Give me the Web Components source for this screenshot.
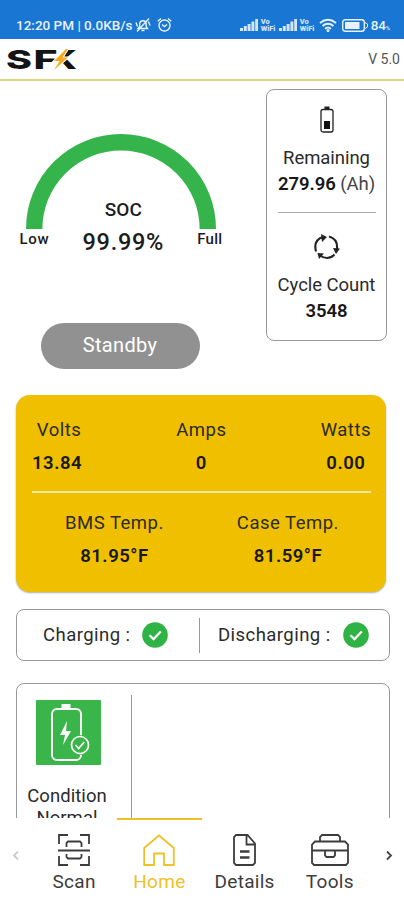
<!DOCTYPE html>
<html lang="en">
<head>
<meta charset="utf-8">
<meta name="viewport" content="width=device-width, initial-scale=1">
<title>SFK Battery</title>
<style>
body{
    margin:0;
    background:#fff;
    color:#2b2b2b;
    font-family:Roboto, "Liberation Sans", sans-serif;
}
</style>
</head>
<body>
<battery-app></battery-app>
<script>
const define = (name, html) => {
    customElements.define(name, class extends HTMLElement {
        constructor() {
            super()
            this._shadowRoot = this.attachShadow({ mode: 'open' })
        }
        connectedCallback(){
            this._shadowRoot.innerHTML = html
        }
    })
}

// android status bar
define('status-bar', `
<style>
:host{
    display:flex;
    align-items:center;
    height:39px;
    box-sizing:border-box;
    padding:11px 14px 0 16px;
    background:#1976d2;
    color:#e8f2fc;
    font-size:13.5px;
    font-weight:500;
    white-space:nowrap;
}
svg{ display:block; flex:none; }
.icons{ margin-left:3px; display:flex; gap:6px; }
.right{ margin-left:auto; display:flex; align-items:center; }
.vo{ width:16px; margin:0 2px 0 3px; font-size:7.5px; line-height:7px; font-weight:900; letter-spacing:-.1px; color:#cfe2f6; }
.level{ margin-left:3px; font-size:13.5px; letter-spacing:-.2px; }
.level small{ font-size:6px; }
</style>
<span>12:20 PM | 0.0KB/s</span>
<div class="icons">
    <svg width="16" height="16" viewBox="0 0 16 16" fill="none" stroke="#e8f2fc" stroke-width="1.4">
        <path d="M3 11.5h9.5l-1.3-2V6.5a3.3 3.3 0 0 0-6.5 0v3zM6.500 13.500h3M2 14.500l12-13M1 5.500l1.500 4M13.500 4.500l1.500 4"/>
    </svg>
    <svg width="15" height="16" viewBox="0 0 15 16" fill="none" stroke="#e8f2fc" stroke-width="1.400">
        <circle cx="7.500" cy="8.500" r="5.500"/><path d="M.7 4.200 4 1.500M14.300 4.200 11 1.500M5 7.500l2.300 2 2.800-2"/>
    </svg>
</div>
<div class="right">
    <svg width="18" height="12" viewBox="0 0 18 12" fill="#d3e5f7"><path d="M0 9h3v3H0zM3.800 7h3v5h-3zM7.600 5h3v7h-3zM11.400 2.500h3V12h-3zM15.200 0H18v12h-2.800z"/></svg>
    <div class="vo">Vo<br>WiFi</div>
    <svg width="18" height="12" viewBox="0 0 18 12" fill="#d3e5f7"><path d="M0 9h3v3H0zM3.800 7h3v5h-3zM7.600 5h3v7h-3zM11.400 2.500h3V12h-3zM15.200 0H18v12h-2.800z"/></svg>
    <div class="vo">Vo<br>WiFi</div>
    <svg style="margin-left:1px" width="18" height="14" viewBox="0 0 18 14" fill="none" stroke="#e8f2fc" stroke-width="1.900">
        <path d="M1 5q8-6.500 16 0M3.500 8q5.500-4.500 11 0M6 10.800q3-2.500 6 0"/><circle cx="9" cy="12.500" r=".6"/>
    </svg>
    <svg style="margin-left:5px" width="26" height="13" viewBox="0 0 26 13">
        <rect x=".7" y=".7" width="21.600" height="11.600" rx="2.500" fill="none" stroke="#e8f2fc" stroke-width="1.400"/>
        <path d="M3 3h14.500v7H3z" fill="#e8f2fc"/><path d="M23 3.500 25.500 5v3L23 9.500" fill="none" stroke="#e8f2fc"/>
    </svg>
    <span class="level">84<small>%</small></span>
</div>
`)

define('app-header', `
<style>
:host{
    display:flex;
    align-items:center;
    justify-content:space-between;
    height:42px;
    box-sizing:border-box;
    padding:0 4px 0 2px;
    border-bottom:2px solid #e5d281;
    background:#fff;
}
svg{ display:block; overflow:visible; }
.version{ font-size:14px; color:#555; }
</style>
<svg width="80" height="40" viewBox="-4 -8 80 40" role="img" aria-label="SFK">
    <g font-family="Inter, sans-serif" font-weight="800" font-size="26" fill="#141414">
        <text x="43" y="21.500" textLength="28" lengthAdjust="spacingAndGlyphs">K</text>
        <path d="M43 0h10.500v24H43z" fill="#fff"/>
        <text x="0" y="21.500" textLength="26" lengthAdjust="spacingAndGlyphs">S</text>
        <text x="27.500" y="21.500" textLength="24" lengthAdjust="spacingAndGlyphs">F</text>
    </g>
    <path d="M60 2 48 14h5.500l-5.500 9 14-12.500h-5.500l5.500-8.500z" fill="#f9a91b" stroke="#fff" stroke-width="2" paint-order="stroke"/>
</svg>
<span class="version">V 5.0</span>
`)

define('soc-gauge', `
<style>
:host{ display:flex; flex-direction:column; align-items:center; }
svg{ display:block; }
.ends{
    width:203px;
    display:flex;
    justify-content:space-between;
    align-items:flex-start;
    margin-top:-30px;
    font-weight:500;
    color:#1c1c1c;
}
.end{ font-size:15px; line-height:20px; margin-top:30px; letter-spacing:.3px; }
.low{ letter-spacing:.7px; }
.mid{ text-align:center; }
.name{ font-size:19px; line-height:22px; }
.value{ font-size:23.500px; line-height:26px; margin-top:8px; letter-spacing:.7px; }
</style>
<svg width="190" height="95" viewBox="0 0 190 95">
    <path d="M8.200 95a86.800 86.800 0 0 1 173.600 0" fill="none" stroke="#34b44a" stroke-width="16.400"/>
</svg>
<div class="ends">
    <span class="end low"><slot name="low"></slot></span>
    <div class="mid">
        <div class="name"><slot name="name"></slot></div>
        <div class="value"><slot></slot></div>
    </div>
    <span class="end"><slot name="full"></slot></span>
</div>
`)

// label over value
define('stat-item', `
<style>
:host{ display:flex; flex-direction:column; align-items:center; white-space:nowrap; }
.label{ font-size:18.500px; line-height:24px; letter-spacing:var(--label-spacing, .5px); }
.value{ font-size:18.500px; line-height:24px; margin-top:var(--gap, 2px); font-weight:600; color:#181818; letter-spacing:var(--value-spacing, .5px); }
</style>
<div class="label"><slot name="label"></slot></div>
<div class="value"><slot></slot></div>
`)

define('check-mark', `
<style>
:host{ display:block; width:26px; height:26px; }
svg{ display:block; }
</style>
<svg width="26" height="26" viewBox="0 0 26 26">
    <circle cx="13" cy="13" r="12.800" fill="#2fb344"/>
    <path d="m7.500 13.300 4 3.800 7.300-7.500" fill="none" stroke="#fff" stroke-width="2.200"/>
</svg>
`)

define('nav-item', `
<style>
:host{
    display:flex;
    flex-direction:column;
    align-items:center;
    width:85.300px;
    height:82px;
    box-sizing:border-box;
    padding-top:14px;
    border-top:2px solid transparent;
    color:#3c3c3c;
}
:host([active]){ color:#edc127; border-top-color:#edc127; }
.label{ font-size:19px; line-height:24px; margin-top:4px; letter-spacing:.3px; }
</style>
<slot name="icon"></slot>
<div class="label"><slot></slot></div>
`)

define('bottom-nav', `
<style>
:host{ display:flex; background:#fff; height:82px; }
.arrow{ width:31.500px; padding-top:32px; box-sizing:border-box; display:flex; justify-content:center; }
svg{ display:block; fill:none; stroke:currentColor; stroke-width:1.800; }
</style>
<div class="arrow"><svg width="8" height="11" viewBox="0 0 8 11" style="color:#ccc"><path d="M6 1.500 2 5.500l4 4"/></svg></div>
<nav-item>
    <svg slot="icon" width="32" height="32" viewBox="0 0 32 32">
        <path d="M1 10V1h9M22 1h9v9M31 22v9h-9M10 31H1v-9M0 16.500h32M8.500 13V9l1.500-1.500h12L23.500 9v4M8.500 20v3l1.500 1.500h12l1.500-1.500v-3"/>
    </svg>Scan
</nav-item>
<nav-item active>
    <svg slot="icon" width="32" height="32" viewBox="0 0 32 32">
        <path d="M1.200 14 16 1.500 30.800 14v17H21V19.500H11V31H1.200z"/>
    </svg>Home
</nav-item>
<nav-item>
    <svg slot="icon" width="32" height="32" viewBox="0 0 32 32">
        <path d="M7 1h11.500L26 9.500V29l-2 2H7l-2-2V3zM17.500 1v9.500H26"/><path d="M11 17.500h9.500M11 23.500h9.500" stroke-width="2.400"/>
    </svg>Details
</nav-item>
<nav-item>
    <svg slot="icon" width="38" height="32" viewBox="0 0 38 32">
        <path d="M4 7.500h30l3 3V29l-2 2H3l-2-2V10.500zM9 7.500V3l2-2h16l2 2v4.500M1 16.500h36M14 16.500v5l1.500 1.500h7l1.500-1.500v-5"/>
    </svg>Tools
</nav-item>
<div class="arrow"><svg style="color:#444;margin-left:2px" width="8" height="11" viewBox="0 0 8 11"><path d="m2 1.500 4 4-4 4"/></svg></div>
`)

define('battery-app', `
<style>
:host{ display:flex; flex-direction:column; height:900px; width:404px; overflow:hidden; }
main{ flex:1; min-height:0; overflow:hidden; padding:8px 0 0 16px; }
svg{ display:block; }
.top{ display:flex; height:306px; }
.soc{ width:210px; display:flex; flex-direction:column; align-items:center; padding-top:45px; box-sizing:border-box; }
.pill{
    width:159px;
    height:46px;
    margin:68px 2px 0 0;
    border-radius:23px;
    background:#919191;
    color:#fff;
    font-size:20px;
    line-height:45px;
    text-align:center;
    letter-spacing:.3px;
}
.side{
    width:121px;
    height:252px;
    margin-left:40px;
    box-sizing:border-box;
    border:1px solid #999;
    border-radius:8px;
    display:flex;
    flex-direction:column;
    align-items:center;
    padding-top:16px;
}
.side stat-item{ --label-spacing:-.05px; --value-spacing:-.05px; margin-top:13px; }
.side b{ font-weight:400; color:#444; }
hr{ border:0; margin:0; height:1px; background:#aaa; }
.yellow{
    width:370px;
    height:197px;
    box-sizing:border-box;
    border-radius:14px;
    background:#f0bf00;
    box-shadow:0 1px 2px #0005;
    padding:23px 15px 0 16px;
    --gap:9px;
}
.three{ display:flex; justify-content:space-between; }
.volts{ padding-left:4px; }
.two{ display:flex; justify-content:space-between; padding:18px 32px 0 33px; }
.yellow hr{ margin-top:16px; height:2px; background:#ffec9c; }
.box{ width:374px; box-sizing:border-box; border:1px solid #999; border-radius:8px; display:flex; }
.states{ height:52px; margin-top:17px; align-items:center; font-size:18.500px; letter-spacing:.45px; }
.state{ display:flex; align-items:center; gap:12px; }
.rule{ width:1px; background:#999; }
.condition{ height:300px; margin-top:22px; }
.cond{ width:114px; padding:16px 0 0 0; box-sizing:border-box; display:flex; flex-direction:column; align-items:center; font-size:18.500px; line-height:22px; text-align:center; letter-spacing:.05px; }
.cond svg{ margin:0 11px 20px 0; }
.cond span{ margin-right:14px; }
</style>
<status-bar></status-bar>
<app-header></app-header>
<main>
    <div class="top">
        <div class="soc">
            <soc-gauge><span slot="low">Low</span><span slot="name">SOC</span>99.99%<span slot="full">Full</span></soc-gauge>
            <div class="pill">Standby</div>
        </div>
        <div class="side">
            <svg width="14" height="27" viewBox="0 0 14 27"><path d="M4.500 3V.5h5V3" fill="#222"/><rect x="1" y="3.500" width="12" height="22.500" rx="2" fill="none" stroke="#222" stroke-width="1.300"/><path d="M4 15h6v8H4z" fill="#111"/></svg>
            <stat-item><span slot="label">Remaining</span>279.96 <b>(Ah)</b></stat-item>
            <hr style="width:98px;margin-top:16px">
            <svg style="margin-top:21px" width="26" height="26" viewBox="0 0 26 26">
                <path d="M2 17.500Q-1 6 9 3M15 2.500Q24 5 23 15M20.500 20.500Q14 27 6 21.500" fill="none" stroke="#222" stroke-width="2.100"/>
                <path d="m7 0 6 3-5 5zM19 14l7 .500-4 5.500zM3.500 19l6.500.500-5 5.500z" fill="#222"/>
            </svg>
            <stat-item><span slot="label">Cycle Count</span>3548</stat-item>
        </div>
    </div>
    <div class="yellow">
        <div class="three">
            <stat-item><span slot="label" class="volts">Volts</span>13.84</stat-item>
            <stat-item><span slot="label">Amps</span>0</stat-item>
            <stat-item><span slot="label">Watts</span>0.00</stat-item>
        </div>
        <hr>
        <div class="two">
            <stat-item><span slot="label">BMS Temp.</span>81.95°F</stat-item>
            <stat-item><span slot="label">Case Temp.</span>81.59°F</stat-item>
        </div>
    </div>
    <div class="box states">
        <div class="state" style="width:182px;padding-left:26px;box-sizing:border-box">Charging :<check-mark></check-mark></div>
        <div class="rule" style="height:35px"></div>
        <div class="state" style="padding-left:18px">Discharging :<check-mark></check-mark></div>
    </div>
    <div class="box condition">
        <div class="cond">
            <svg width="65" height="65" viewBox="0 0 65 65">
                <rect width="65" height="65" rx="1" fill="#39b54a"/>
                <path d="M25.500 4h9v5h-9z" fill="#fff"/>
                <rect x="16" y="9" width="29" height="51" rx="5" fill="none" stroke="#fff" stroke-width="1.900"/>
                <path d="m31 21-7 14h5l-2 10 8-14h-5z" fill="#fff"/>
                <circle cx="44" cy="45" r="10" fill="#39b54a"/>
                <circle cx="44" cy="45" r="8.500" fill="none" stroke="#fff" stroke-width="1.700"/>
                <path d="m39.500 45 3.200 3.500 5.500-6.500" fill="none" stroke="#fff" stroke-width="1.700"/>
            </svg>
            <span>Condition<br>Normal</span>
        </div>
        <div class="rule" style="margin-top:11px"></div>
    </div>
</main>
<bottom-nav></bottom-nav>
`)
</script>
</body>
</html>
